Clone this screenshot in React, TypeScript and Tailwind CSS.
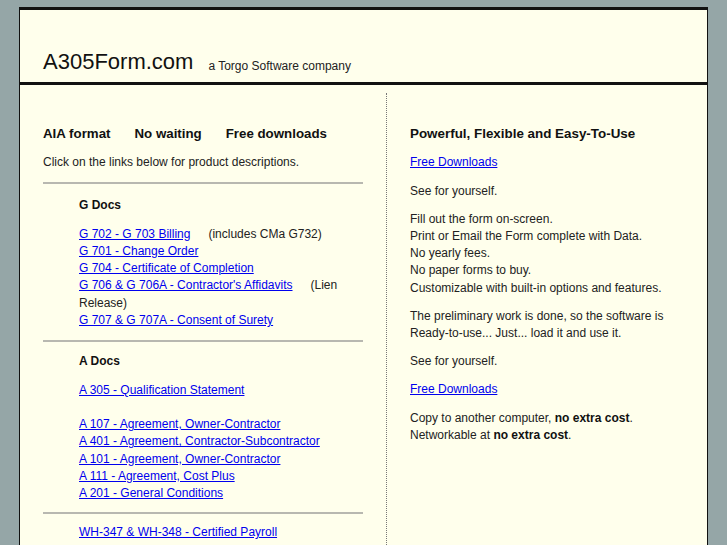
export default function App() {
  const link = "text-[#0000ee] underline";
  return (
    <div className="min-h-[545px] h-[545px] overflow-hidden bg-[#95a6a7] pt-[7px] pl-[19px] pr-[19px]" style={{ fontFamily: '"Liberation Sans", Arial, sans-serif' }}>
      <div className="bg-[#ffffec] border-t-[3px] border-[#111] border-l border-r h-[600px]">
        <div className="h-[75px] flex items-end pb-[9px] pl-[23px] border-b-[3px] border-[#111]">
          <span className="text-[22px] leading-none text-[#111]">A305Form.com</span>
          <span className="text-[12px] ml-[15px] text-[#222] leading-none mb-[1px]">a Torgo Software company</span>
        </div>
        <div className="flex pt-[8px]">
          <div className="w-[366px] pl-[23px] pr-[23px] pt-[34px] text-[12px] text-[#222]">
            <div className="flex gap-[24px] text-[13.3px] font-bold text-[#111] leading-none">
              <span>AIA format</span><span>No waiting</span><span>Free downloads</span>
            </div>
            <div className="mt-[16px] leading-none">Click on the links below for product descriptions.</div>
            <hr className="mt-[14px] border-t-2 border-[#b8b8b0]" />
            <div className="pl-[36px] pt-[13px] leading-[17.3px]">
              <div className="font-bold text-[#111]">G Docs</div>
              <div className="mt-[11px]"><a className={link}>G 702 - G 703 Billing</a><span className="ml-[18px]">(includes CMa G732)</span></div>
              <div><a className={link}>G 701 - Change Order</a></div>
              <div><a className={link}>G 704 - Certificate of Completion</a></div>
              <div><a className={link}>G 706 &amp; G 706A - Contractor's Affidavits</a><span className="ml-[18px]">(Lien Release)</span></div>
              <div><a className={link}>G 707 &amp; G 707A - Consent of Surety</a></div>
            </div>
            <hr className="mt-[11px] border-t-2 border-[#b8b8b0]" />
            <div className="pl-[36px] pt-[11px] leading-[17.3px]">
              <div className="font-bold text-[#111]">A Docs</div>
              <div className="mt-[11px]"><a className={link}>A 305 - Qualification Statement</a></div>
              <div className="mt-[17px]"><a className={link}>A 107 - Agreement, Owner-Contractor</a></div>
              <div><a className={link}>A 401 - Agreement, Contractor-Subcontractor</a></div>
              <div><a className={link}>A 101 - Agreement, Owner-Contractor</a></div>
              <div><a className={link}>A 111 - Agreement, Cost Plus</a></div>
              <div><a className={link}>A 201 - General Conditions</a></div>
            </div>
            <hr className="mt-[10px] border-t-2 border-[#b8b8b0]" />
            <div className="pl-[36px] pt-[10px] leading-[17.3px]">
              <div><a className={link}>WH-347 &amp; WH-348 - Certified Payroll</a></div>
            </div>
          </div>
          <div className="border-l border-dotted border-[#777] h-[500px]"></div>
          <div className="pl-[23px] pt-[34px] text-[12px] text-[#222] leading-[17.2px]">
            <div className="text-[13.4px] font-bold text-[#111] leading-none">Powerful, Flexible and Easy-To-Use</div>
            <div className="mt-[14px]"><a className={link}>Free Downloads</a></div>
            <div className="mt-[11px]">See for yourself.</div>
            <div className="mt-[11px]">Fill out the form on-screen.<br />Print or Email the Form complete with Data.<br />No yearly fees.<br />No paper forms to buy.<br />Customizable with built-in options and features.</div>
            <div className="mt-[11px]">The preliminary work is done, so the software is<br />Ready-to-use... Just... load it and use it.</div>
            <div className="mt-[11px]">See for yourself.</div>
            <div className="mt-[11px]"><a className={link}>Free Downloads</a></div>
            <div className="mt-[11px]">Copy to another computer, <b className="text-[#111]">no extra cost</b>.<br />Networkable at <b className="text-[#111]">no extra cost</b>.</div>
          </div>
        </div>
      </div>
    </div>
  );
}
